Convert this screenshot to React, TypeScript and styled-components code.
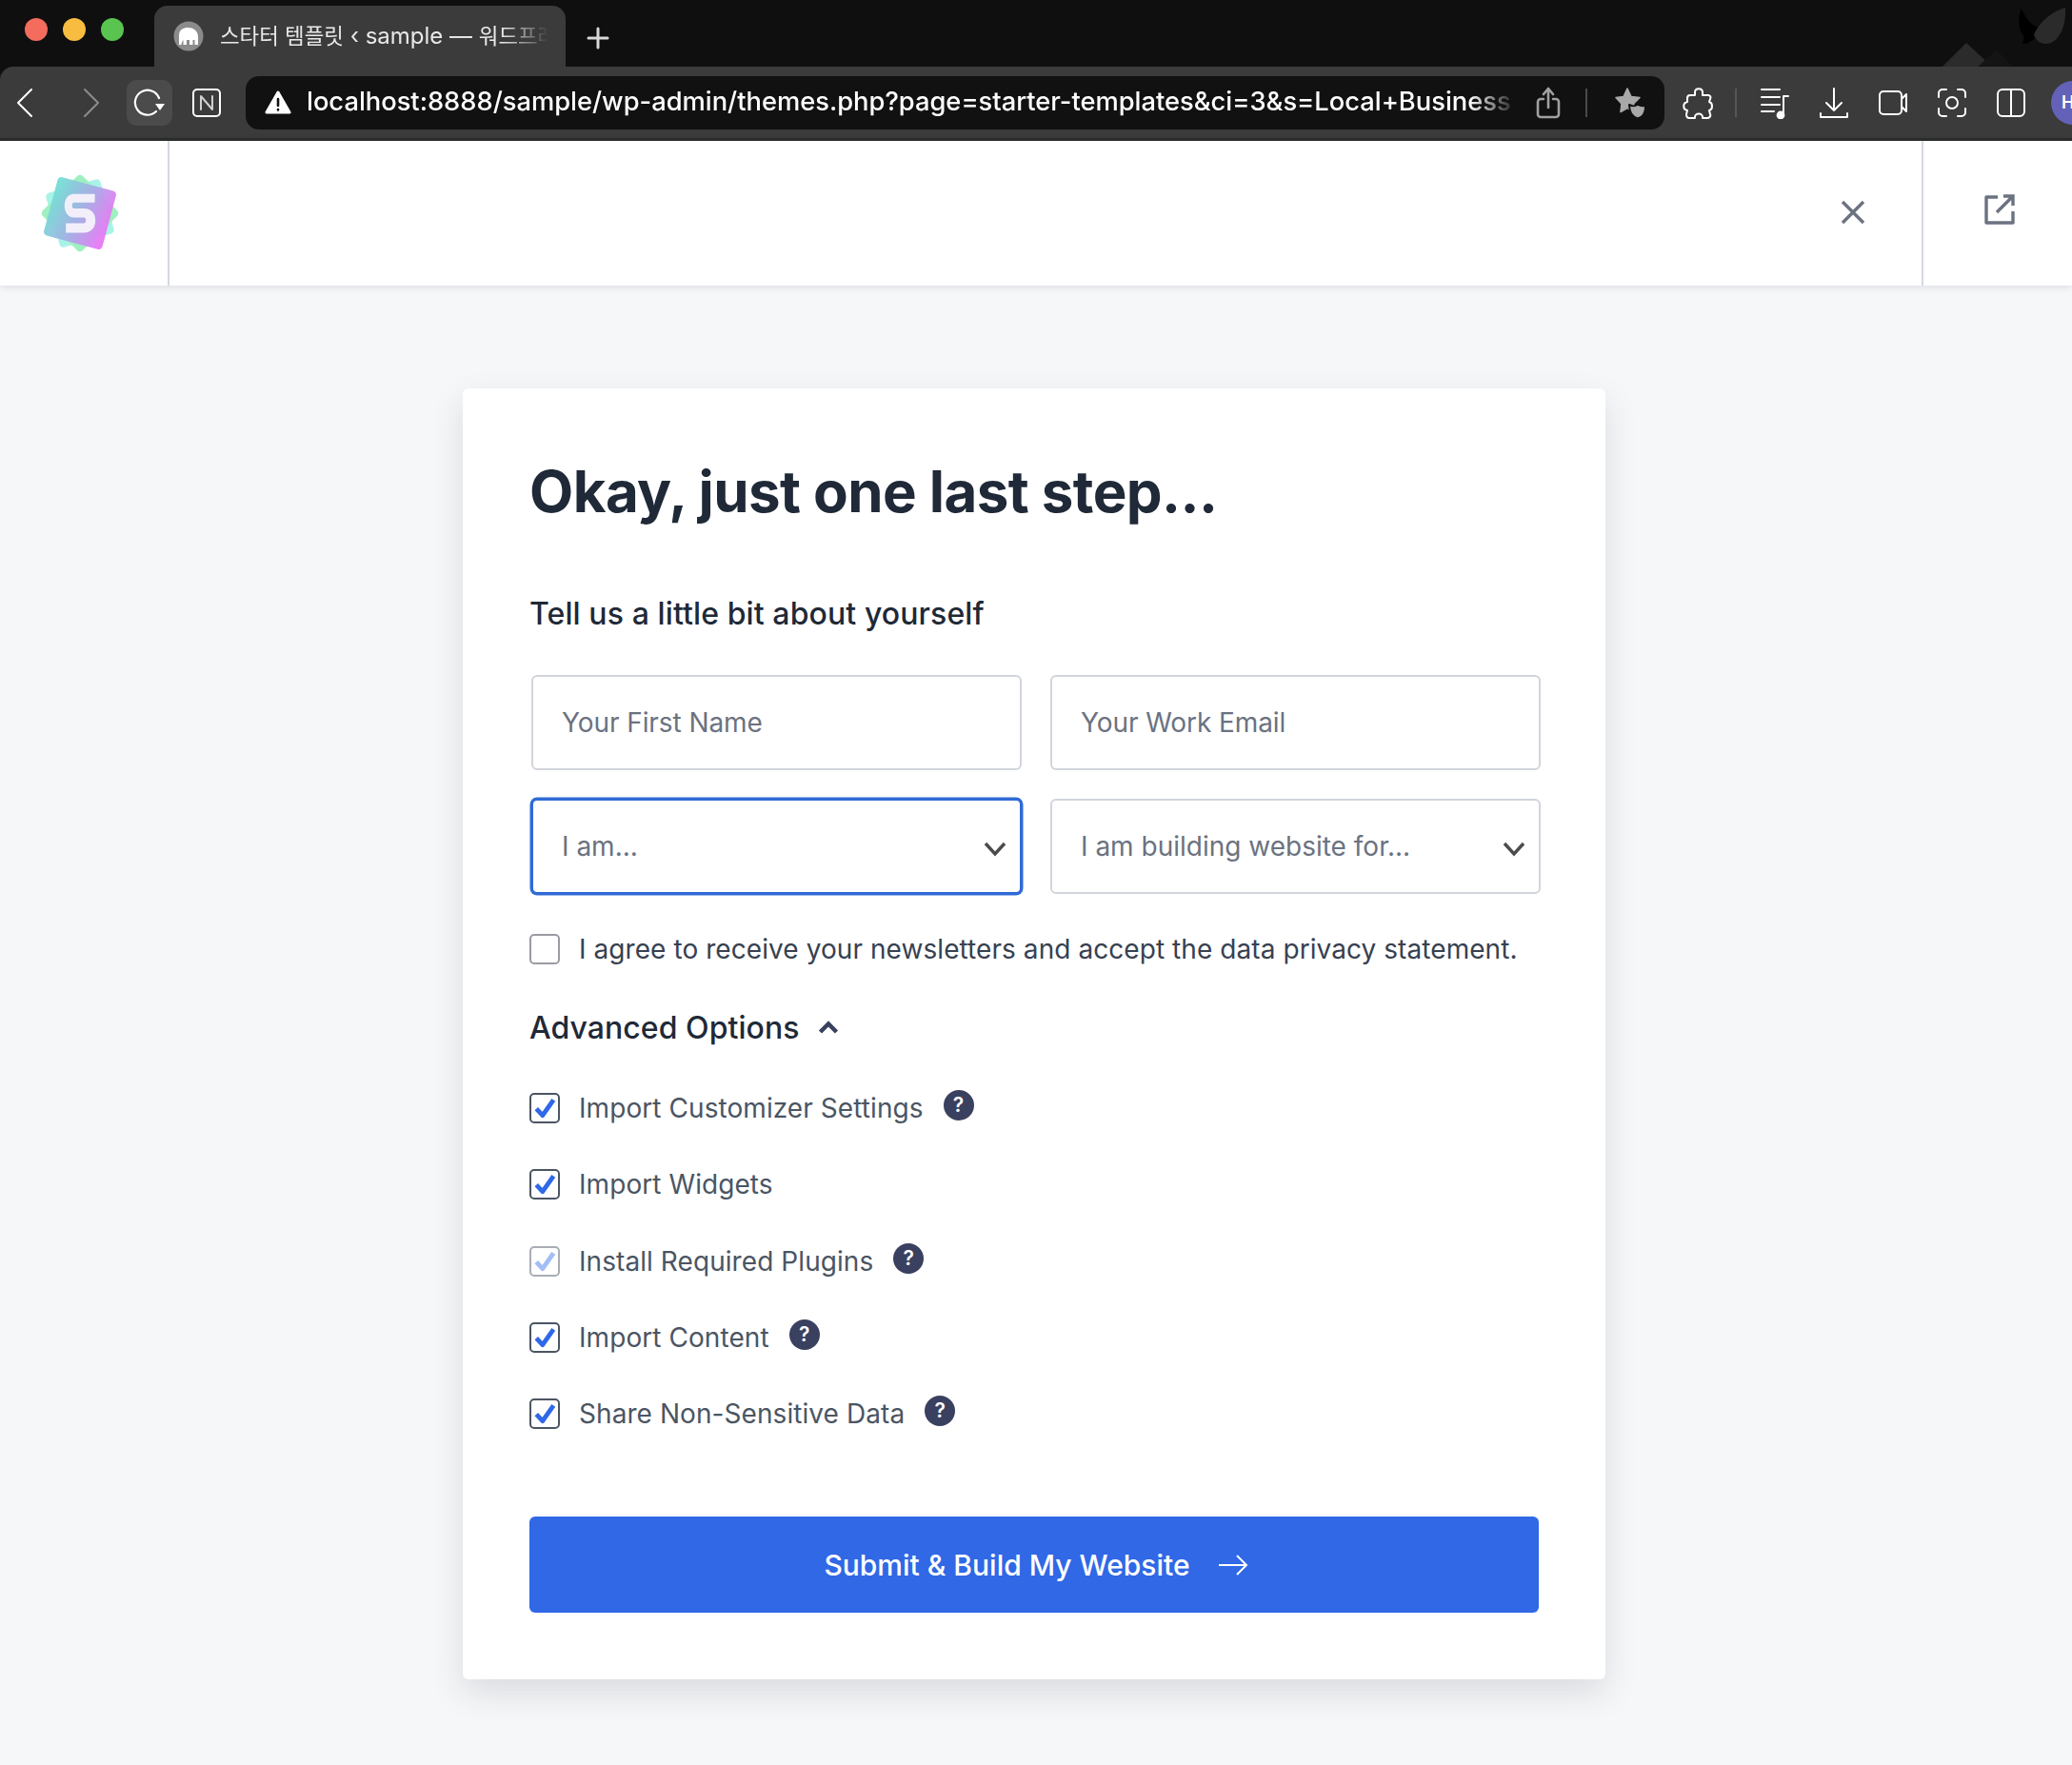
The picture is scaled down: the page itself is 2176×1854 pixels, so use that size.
import { FC, ReactNode } from "react";
import styled, { createGlobalStyle } from "styled-components";

const GlobalStyle = createGlobalStyle`
  html, body {
    margin: 0;
    padding: 0;
    background: #f6f7f9;
  }
  * {
    box-sizing: border-box;
  }
  body {
    font-family: Inter, "Noto Sans CJK KR", sans-serif;
    -webkit-font-smoothing: antialiased;
  }
`;

const Page = styled.div`
  width: 2176px;
  height: 1854px;
  overflow: hidden;
  display: flex;
  flex-direction: column;
`;

/* browser chrome */
const Chrome = styled.div`
  flex: none;
  background: #0f0f0f;
`;

const TitleBar = styled.div`
  position: relative;
  height: 70px;
  display: flex;
  align-items: flex-end;
  padding-left: 26px;
`;

const Lights = styled.div`
  display: flex;
  gap: 16px;
  align-self: flex-start;
  margin-top: 19px;
  width: 136px;
`;

const Light = styled.span<{ $color: string }>`
  width: 24px;
  height: 24px;
  border-radius: 50%;
  background: ${(p) => p.$color};
`;

const Tab = styled.div`
  width: 432px;
  height: 64px;
  background: #3b3b3b;
  border-radius: 14px 14px 0 0;
  display: flex;
  align-items: center;
  padding: 0 18px 0 20px;
  gap: 17px;
  color: #e8e8e8;
`;

const TabTitle = styled.span`
  font-size: 24px;
  white-space: nowrap;
  overflow: hidden;
  flex: 1;
  margin-top: -5px;
  -webkit-mask-image: linear-gradient(to right, #000 86%, transparent 100%);
  mask-image: linear-gradient(to right, #000 86%, transparent 100%);
`;

const CjkRun = styled.span`
  font-size: 22.4px;
`;

const NewTab = styled.span`
  display: flex;
  margin: 0 0 18px 22px;
`;

const ThemeDecor = styled.svg`
  position: absolute;
  right: 0;
  top: 0;
`;

const ToolBar = styled.div`
  height: 78px;
  background: #3b3b3b;
  display: flex;
  align-items: center;
  overflow: hidden;
  border-bottom: 3px solid #2c2c2c;
  border-top-left-radius: 14px;
  padding: 0 0 0 10px;
`;

const NavIcon = styled.span<{ $w: number; $pl?: number; $active?: boolean }>`
  width: ${(p) => p.$w}px;
  height: 48px;
  flex: none;
  display: flex;
  align-items: center;
  justify-content: center;
  padding-left: ${(p) => p.$pl ?? 0}px;
  border-radius: 10px;
  background: ${(p) => (p.$active ? "#4b4b4b" : "transparent")};
`;

const UrlBar = styled.div`
  width: 1490px;
  height: 56px;
  flex: none;
  background: #111111;
  border-radius: 14px;
  display: flex;
  align-items: center;
  padding: 0 0 0 20px;
  color: #ffffff;
`;

const UrlText = styled.span`
  width: 1272px;
  margin: -2px 0 0 16px;
  flex: none;
  font-size: 27.3px;
  font-weight: 500;
  white-space: nowrap;
  overflow: hidden;
  -webkit-mask-image: linear-gradient(to right, #000 96%, transparent 100%);
  mask-image: linear-gradient(to right, #000 96%, transparent 100%);
`;

const Divider = styled.span<{ $ml: number; $color: string }>`
  width: 2px;
  height: 30px;
  flex: none;
  margin-left: ${(p) => p.$ml}px;
  background: ${(p) => p.$color};
`;

const Slot = styled.span<{ $ml: number }>`
  display: flex;
  flex: none;
  margin-left: ${(p) => p.$ml}px;
`;

const Avatar = styled.span`
  width: 46px;
  height: 46px;
  flex: none;
  margin-left: 26px;
  border-radius: 50%;
  background: #6461b8;
  color: #fff;
  font-size: 18px;
  font-weight: 600;
  line-height: 46px;
  padding-left: 11px;
`;

/* plugin header */
const Header = styled.header`
  height: 152px;
  flex: none;
  background: #fff;
  display: flex;
  box-shadow: 0 1px 8px rgba(30, 40, 60, 0.14);
  position: relative;
`;

const LogoCell = styled.div`
  width: 178px;
  border-right: 2px solid #d5d9e0;
  display: flex;
  align-items: center;
  justify-content: center;
  padding-right: 8px;
`;

const HeaderSpace = styled.div`
  flex: 1;
  display: flex;
  align-items: center;
  justify-content: flex-end;
  padding: 0 58px 2px 0;
`;

const ExternalCell = styled.div`
  width: 158px;
  border-left: 2px solid #d5d9e0;
  display: flex;
  align-items: center;
  justify-content: center;
  padding: 0 0 8px 4px;
`;

/* form */
const Main = styled.main`
  flex: 1;
  padding: 108px 0 0 486px;
`;

const Card = styled.div`
  width: 1200px;
  background: #fff;
  border-radius: 6px;
  padding: 70px 70px 70px;
  box-shadow: 0 14px 34px rgba(30, 35, 50, 0.13);
`;

const Title = styled.h1`
  margin: 0;
  font-size: 60px;
  line-height: 76px;
  font-weight: 700;
  letter-spacing: -0.58px;
  color: #1f2937;
`;

const Subtitle = styled.h2`
  margin: 71px 0 0;
  font-size: 32px;
  line-height: 40px;
  font-weight: 500;
  letter-spacing: 0.1px;
  color: #1f2937;
`;

const FieldGrid = styled.div`
  margin: 44px 0 0 2px;
  width: 1060px;
  display: grid;
  grid-template-columns: 515px 515px;
  gap: 30px;
`;

const TextField = styled.input`
  height: 100px;
  width: 100%;
  border: 2px solid #d1d5db;
  border-radius: 6px;
  padding: 0 30px;
  background: #fff;
  font: 400 28px Inter, sans-serif;
  letter-spacing: -0.08px;
  outline: none;
  &::placeholder {
    color: #6b7280;
    opacity: 1;
  }
`;

const SelectWrap = styled.div`
  position: relative;
`;

const SelectField = styled.select<{ $focused?: boolean }>`
  appearance: none;
  height: 100px;
  width: 100%;
  border: 2px solid ${(p) => (p.$focused ? "#2f6bd6" : "#d1d5db")};
  box-shadow: ${(p) => (p.$focused ? "0 0 0 1.5px #2f6bd6" : "none")};
  border-radius: 6px;
  padding: 0 30px;
  background: #fff;
  color: #6b7280;
  font: 400 28px Inter, sans-serif;
  outline: none;
`;

const Chevron = styled.svg`
  position: absolute;
  right: 16px;
  top: 45px;
`;

const CheckRow = styled.label<{ $mt: number }>`
  display: flex;
  align-items: center;
  height: 40px;
  margin-top: ${(p) => p.$mt}px;
  font-size: 28px;
  letter-spacing: 0.07px;
  color: #4b5563;
`;

const Box = styled.span<{ $dim?: boolean }>`
  width: 32px;
  height: 32px;
  flex: none;
  border: 2px solid ${(p) => (p.$dim ? "#a9adb5" : "#4b5563")};
  border-radius: 5px;
  margin-right: 20px;
  display: flex;
  align-items: center;
  justify-content: center;
  background: #fff;
`;

const AgreeBox = styled(Box)`
  border-color: #9a9ca3;
`;

const AgreeText = styled.span`
  color: #374151;
  white-space: nowrap;
`;

const Advanced = styled.div`
  display: flex;
  align-items: center;
  gap: 19px;
  height: 40px;
  margin-top: 42px;
  font-size: 32px;
  font-weight: 500;
  letter-spacing: 0.05px;
  color: #1f2937;
`;

const Help = styled.span`
  width: 32px;
  height: 32px;
  margin: -6px 0 0 21px;
  border-radius: 50%;
  background: #3a405f;
  color: #fff;
  font-size: 21px;
  font-weight: 600;
  line-height: 32px;
  text-align: center;
`;

const OptionList = styled.div`
  display: flex;
  flex-direction: column;
  gap: 40.25px;
  margin-top: 45px;
`;

const SubmitButton = styled.button`
  width: 1060px;
  height: 101px;
  margin-top: 88px;
  display: flex;
  align-items: center;
  justify-content: center;
  gap: 29px;
  padding-right: 2px;
  border: 0;
  border-radius: 6px;
  background: #3068e6;
  color: #fff;
  font: 500 30px Inter, sans-serif;
`;

const Icon: FC<{ size?: number; w?: number; h?: number; color?: string; sw?: number; children: ReactNode }> = ({
  size = 32,
  w,
  h,
  color = "#fff",
  sw = 2.4,
  children,
}) => (
  <svg
    width={w ?? size}
    height={h ?? size}
    viewBox={`0 0 ${w ?? size} ${h ?? size}`}
    fill="none"
    stroke={color}
    strokeWidth={sw}
    strokeLinecap="round"
    strokeLinejoin="round"
  >
    {children}
  </svg>
);

const Tick: FC<{ dim?: boolean }> = ({ dim }) => (
  <svg width="24" height="24" viewBox="0 0 22 22" fill="none">
    <path
      d="M3 11.5 L9 18 L19.5 3"
      stroke={dim ? "#a3bdf6" : "#2f68e8"}
      strokeWidth="4.4"
      strokeLinejoin="round"
    />
  </svg>
);

const Logo = () => (
  <svg width="106" height="106" viewBox="0 0 100 100">
    <defs>
      <linearGradient id="logoFace" x1="0" y1="0.4" x2="1" y2="0.6">
        <stop offset="0" stopColor="#78dcd6" />
        <stop offset="0.5" stopColor="#a5aee6" />
        <stop offset="1" stopColor="#e87af6" />
      </linearGradient>
    </defs>
    <rect x="22" y="22" width="56" height="56" rx="4" fill="#a8f3e8" transform="rotate(-16 50 50)" />
    <rect x="22" y="22" width="56" height="56" rx="4" fill="#9ff0c0" transform="rotate(45 50 50)" />
    <rect x="20" y="20" width="60" height="60" rx="4" fill="url(#logoFace)" opacity="0.96" transform="rotate(15 50 50)" />
    <path
      fill="#f2effb"
      d="M64.7 31 H44.3 C38 31 34.7 36 34.7 42.5 C34.7 50 39 54.3 44.3 54.3 H54 C56.5 54.3 56.5 60 54 60 H36 V69.3 H54 C61 69.3 65.3 64 65.3 57 C65.3 50 61 45.3 54 45.3 H44 C41.5 45.3 41.5 39.3 44 39.3 H64.7 Z"
    />
  </svg>
);

const MampFavicon = () => (
  <svg width="32" height="32" viewBox="0 0 32 32">
    <circle cx="16" cy="16" r="15.5" fill="#8b8b8b" />
    <path
      fill="#fff"
      d="M6 15 C6 9 11 7 15 7 C21 7 26 10 26 17 V25 H22.5 V20 H20.5 V25 H17 V20 H14 V25 H10.5 V20 C9.5 21 8.5 23 8.5 25 H6 Z"
    />
  </svg>
);

const options = [
  { label: "Import Customizer Settings", help: true },
  { label: "Import Widgets" },
  { label: "Install Required Plugins", help: true, dim: true },
  { label: "Import Content", help: true },
  { label: "Share Non-Sensitive Data", help: true },
];

const App: FC = () => {
  return (
    <Page>
      <GlobalStyle />
      <Chrome>
        <TitleBar>
          <Lights>
            <Light $color="#f46c5e" />
            <Light $color="#f8bd40" />
            <Light $color="#5ac451" />
          </Lights>
          <Tab>
            <MampFavicon />
            <TabTitle>
              <CjkRun>스타터 템플릿</CjkRun> ‹ sample — <CjkRun>워드프레스</CjkRun>
            </TabTitle>
          </Tab>
          <NewTab>
            <Icon size={24} color="#d8d8d8" sw={3}>
              <path d="M12 2 V22 M2 12 H22" />
            </Icon>
          </NewTab>
          <ThemeDecor width="140" height="70" viewBox="0 0 140 70">
            <path d="M4 70 L29 45 L56 70 Z" fill="#2b2b2b" />
            <path d="M41 70 L61 52 L78 70 Z" fill="#141414" />
            <path d="M87 9 C82 20 84 34 90 38 L88 46 C96 46 104 40 108 30 C100 28 92 22 87 9 Z" fill="#000" />
            <path d="M133 8 C120 12 108 20 100 36 C102 44 110 48 118 45 C128 40 134 26 133 8 Z" fill="#2b2b2b" />
          </ThemeDecor>
        </TitleBar>

        <ToolBar>
          <NavIcon $w={32}>
            <Icon w={20} h={32} sw={2}>
              <path d="M17 2 L3 16 L17 30" />
            </Icon>
          </NavIcon>
          <NavIcon $w={91} $pl={16}>
            <Icon w={20} h={32} color="#8c8c8c" sw={2}>
              <path d="M3 2 L17 16 L3 30" />
            </Icon>
          </NavIcon>
          <NavIcon $w={48} $active>
            <Icon size={34} sw={2.2}>
              <path d="M27 12 A13 13 0 1 0 24 26" />
              <path d="M23 18 H33 L28 25 Z" fill="#fff" stroke="none" />
            </Icon>
          </NavIcon>
          <Slot $ml={20}>
            <Icon size={32} sw={2}>
              <rect x="2" y="2" width="28" height="28" rx="4" />
              <path d="M10 23 V9 L22 23 V9" stroke="#d0d0d0" />
            </Icon>
          </Slot>
          <Slot $ml={25}>
            <UrlBar>
              <Icon w={28} h={26}>
                <path d="M14 2 L26 23 H2 Z" fill="#fff" strokeWidth="3" />
                <path d="M14 9 V16 M14 20 V20.5" stroke="#111" strokeWidth="2.6" />
              </Icon>
              <UrlText>localhost:8888/sample/wp-admin/themes.php?page=starter-templates&amp;ci=3&amp;s=Local+Business</UrlText>
              <Slot $ml={19}>
                <Icon w={26} h={34} color="#a0a0a0" sw={2.6}>
                  <path d="M8 13 H5 A3 3 0 0 0 2 16 V29 A3 3 0 0 0 5 32 H21 A3 3 0 0 0 24 29 V16 A3 3 0 0 0 21 13 H18" />
                  <path d="M13 22 V3 M8 8 L13 2 L18 8" />
                </Icon>
              </Slot>
              <Divider $ml={26} $color="#4a4a4a" />
              <Slot $ml={28}>
                <Icon w={34} h={34} color="#a8a8a8" sw={1.6}>
                  <path
                    fill="#a8a8a8"
                    d="M14 2 L18 10.5 L27 11.5 L20.5 18 L22 27 L14 22.5 L7 26.5 L8 18 L2 11.5 L10 10.5 Z"
                  />
                  <path
                    fill="#a8a8a8"
                    stroke="#111"
                    strokeWidth="2"
                    d="M16 19 C20 21 22 21 25 18.5 C28 21 30 21 33 19.5 C33.5 27 30 32 25 33.5 C20 32 16 27 16 19 Z"
                  />
                </Icon>
              </Slot>
            </UrlBar>
          </Slot>
          <Slot $ml={19}>
            <Icon size={34} sw={2}>
              <path d="M13 6 C13 1 21 1 21 6 C21 8 21 9 21 9 H27 C29 9 30 11 29 13 L28 16 C32 17 32 24 28 25 L29 29 C30 31 28 33 26 33 H21 C22 27 12 27 13 33 H7 C5 33 4 31 4 29 L5 25 C0 24 0 17 5 16 L5 12 C5 10 6 9 8 9 H13 Z" />
            </Icon>
          </Slot>
          <Divider $ml={21} $color="#565656" />
          <Slot $ml={24}>
            <Icon w={32} h={34} sw={2}>
              <path d="M2 3 H21 M2 11 H21 M2 19 H21 M2 26 H15" />
              <path d="M25 29 V10 H30" />
              <circle cx="22" cy="30" r="3.4" fill="#fff" />
            </Icon>
          </Slot>
          <Slot $ml={30}>
            <Icon w={32} h={34} sw={2}>
              <path d="M16 2 V25 M8 17 L16 25 L24 17" />
              <path d="M2 28 V32 H30 V28" />
            </Icon>
          </Slot>
          <Slot $ml={30}>
            <Icon w={32} h={30} sw={2}>
              <rect x="2" y="3" width="23" height="24" rx="4" />
              <path d="M25 11 L30 6 V24 L25 19" />
            </Icon>
          </Slot>
          <Slot $ml={30}>
            <Icon size={32} sw={2}>
              <path d="M10 2 H6 A4 4 0 0 0 2 6 V10 M22 2 H26 A4 4 0 0 1 30 6 V10 M2 22 V26 A4 4 0 0 0 6 30 H10 M30 22 V26 A4 4 0 0 1 26 30 H22" />
              <circle cx="16" cy="16" r="6" />
            </Icon>
          </Slot>
          <Slot $ml={30}>
            <Icon size={32} sw={2}>
              <rect x="2" y="2" width="28" height="28" rx="5" />
              <path d="M16 2 V30" />
            </Icon>
          </Slot>
          <Avatar>H</Avatar>
        </ToolBar>
      </Chrome>

      <Header>
        <LogoCell>
          <Logo />
        </LogoCell>
        <HeaderSpace>
          <Icon size={28} color="#6b7280" sw={3.4}>
            <path d="M3 3 L25 25 M25 3 L3 25" strokeLinecap="butt" />
          </Icon>
        </HeaderSpace>
        <ExternalCell>
          <Icon size={34} color="#6b7280" sw={3.4}>
            <path d="M15 4 H3 V31 H31 V19" strokeLinecap="butt" strokeLinejoin="round" />
            <path d="M14 20 L31 3 M21 3 H31 V13" strokeLinecap="butt" strokeLinejoin="miter" />
          </Icon>
        </ExternalCell>
      </Header>

      <Main>
        <Card>
          <Title>Okay, just one last step...</Title>
          <Subtitle>Tell us a little bit about yourself</Subtitle>
          <FieldGrid>
            <TextField placeholder="Your First Name" />
            <TextField placeholder="Your Work Email" />
            <SelectWrap>
              <SelectField $focused defaultValue="">
                <option value="">I am...</option>
              </SelectField>
              <Chevron width="24" height="16" viewBox="0 0 24 16" fill="none" stroke="#4b4b4b" strokeWidth="3.4">
                <path d="M2 2 L12 13 L22 2" />
              </Chevron>
            </SelectWrap>
            <SelectWrap>
              <SelectField defaultValue="">
                <option value="">I am building website for...</option>
              </SelectField>
              <Chevron width="24" height="16" viewBox="0 0 24 16" fill="none" stroke="#4b4b4b" strokeWidth="3.4">
                <path d="M2 2 L12 13 L22 2" />
              </Chevron>
            </SelectWrap>
          </FieldGrid>

          <CheckRow $mt={38}>
            <AgreeBox />
            <AgreeText>I agree to receive your newsletters and accept the data privacy statement.</AgreeText>
          </CheckRow>

          <Advanced>
            Advanced Options
            <svg width="22" height="14" viewBox="0 0 22 14" fill="none" stroke="#3a405f" strokeWidth="4.5">
              <path d="M2.5 12 L11 3.5 L19.5 12" />
            </svg>
          </Advanced>

          <OptionList>
            {options.map((o) => (
              <CheckRow key={o.label} $mt={0}>
                <Box $dim={o.dim}>
                  <Tick dim={o.dim} />
                </Box>
                {o.label}
                {o.help && <Help>?</Help>}
              </CheckRow>
            ))}
          </OptionList>

          <SubmitButton>
            Submit &amp; Build My Website
            <svg width="32" height="24" viewBox="0 0 32 24" fill="none" stroke="#fff" strokeWidth="2">
              <path d="M1 12 H30 M20 2 L30 12 L20 22" />
            </svg>
          </SubmitButton>
        </Card>
      </Main>
    </Page>
  );
};

export default App;
